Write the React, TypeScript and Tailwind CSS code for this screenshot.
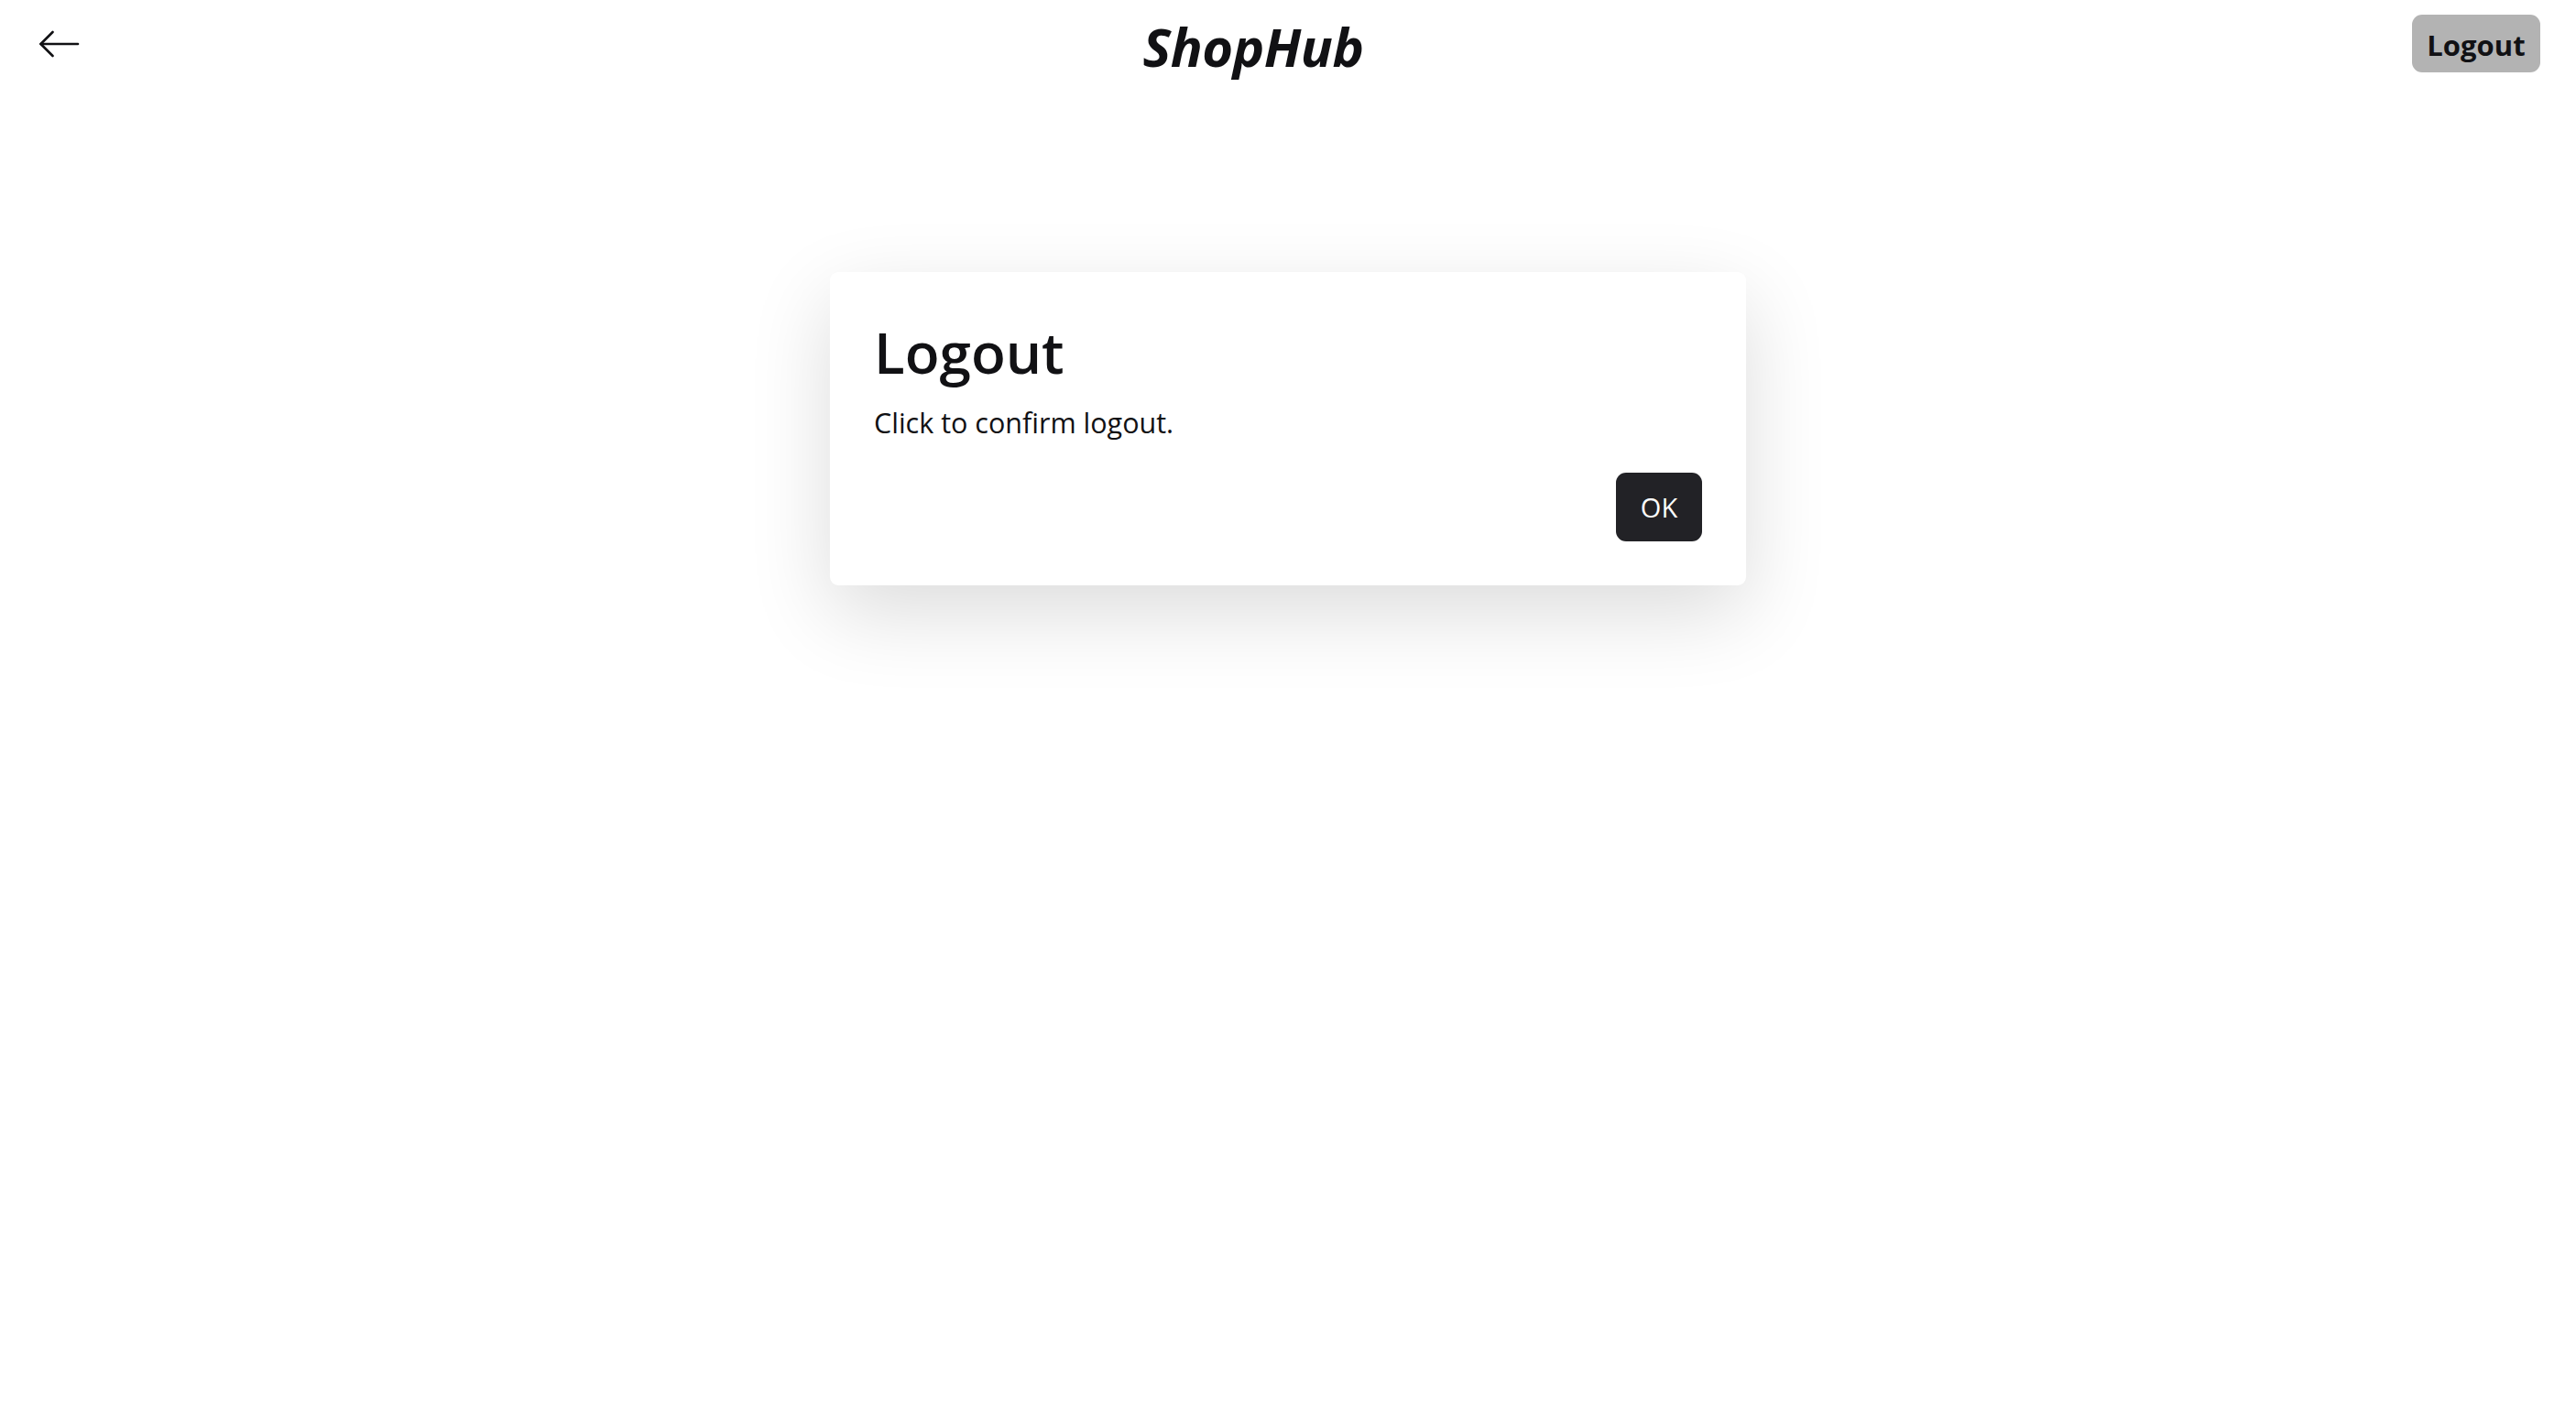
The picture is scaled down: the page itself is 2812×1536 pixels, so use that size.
import React from "react";

export default function App() {
  return (
    <div className="min-h-screen w-full bg-white text-[#111114]" style={{ fontFamily: '"Open Sans", "Noto Sans", sans-serif' }}>
      <header className="flex items-center justify-between pl-[43px] pr-[39px] h-[95px]">
        <div className="w-[60px] flex items-center">
          <svg width="44" height="30" viewBox="0 0 44 30" fill="none" stroke="#111114" strokeWidth="2.6" strokeLinecap="round" strokeLinejoin="round">
            <path d="M1.5 15 L42 15" />
            <path d="M14.5 2 L1.5 15 L14.5 28" />
          </svg>
        </div>
        <h1 className="m-0 mt-[6px] text-[58px] font-bold italic leading-normal tracking-[-0.5px]">ShopHub</h1>
        <button className="w-[140px] h-[63px] rounded-[11px] bg-[#b3b3b3] text-[31px] font-bold text-[#111114] flex items-center justify-center pt-[3px]">
          Logout
        </button>
      </header>

      <div className="pt-[202px] flex justify-center">
        <div className="w-[1000px] rounded-[9px] bg-white px-12 pt-[41px] pb-12 shadow-[0_30px_90px_rgba(0,0,0,0.14)]">
          <h2 className="m-0 text-[62px] font-semibold leading-normal">Logout</h2>
          <p className="mt-[8px] text-[30.5px] leading-normal">Click to confirm logout.</p>
          <div className="mt-[31px] flex justify-end">
            <button className="w-[94px] h-[75px] rounded-[11px] bg-[#222226] text-white text-[29px] flex items-center justify-center">
              OK
            </button>
          </div>
        </div>
      </div>
    </div>
  );
}
